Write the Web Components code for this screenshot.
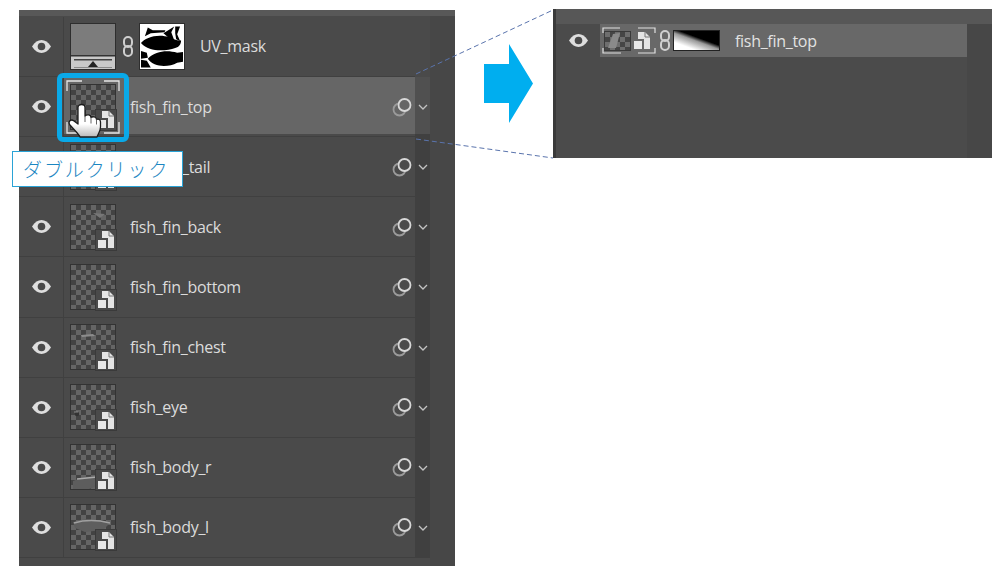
<!DOCTYPE html>
<html lang="ja">
<head>
<meta charset="utf-8">
<title>fish layers</title>
<style>
  html, body { margin: 0; background: #fff; }
  body { width: 992px; height: 568px; overflow: hidden; font-family: "Open Sans", "Noto Sans", sans-serif; }
</style>
</head>
<body>
<how-to-figure>
  <layer-panel slot="before">
    <layer-row kind="mask" name="UV_mask"></layer-row>
    <layer-row art="none" name="fish_fin_top" active></layer-row>
    <layer-row art="tail" name="_tail" indent></layer-row>
    <layer-row art="back" name="fish_fin_back"></layer-row>
    <layer-row art="none" name="fish_fin_bottom"></layer-row>
    <layer-row art="chest" name="fish_fin_chest"></layer-row>
    <layer-row art="eye" name="fish_eye"></layer-row>
    <layer-row art="bodyr" name="fish_body_r"></layer-row>
    <layer-row art="bodyl" name="fish_body_l"></layer-row>
  </layer-panel>
  <next-arrow slot="arrow"></next-arrow>
  <after-panel slot="after"></after-panel>
</how-to-figure>

<script>
const EYE = `<svg width="19" height="13" viewBox="0 0 19 13"><path d="M0 6.500C3 2 6 0 9.500 0S16 2 19 6.500C16 11 13 13 9.500 13S3 11 0 6.500z" fill="#dedede"/><circle cx="9.500" cy="6.500" r="3.800" fill="#4a4a4a"/></svg>`;
const LINK = `<svg width="10" height="21" viewBox="0 0 10 21" fill="none" stroke="#cfcfcf" stroke-width="2"><rect x="1" y="1" width="8" height="10" rx="4"/><rect x="1" y="10" width="8" height="10" rx="4"/></svg>`;
const SMART = `<svg width="16" height="17" viewBox="0 0 16 17"><path d="M4 0h7l5 5v12H10V7H4z" fill="#e4e4e4"/><path d="M11 0v5h5" fill="none" stroke="#777" stroke-width="1"/><rect x="0" y="9" width="8" height="8" fill="#e8e8e8"/></svg>`;
const ART = {
  none: '',
  tail: '<path d="M18 34l14-4 2 6-14 2z" fill="#8a8a8a"/>',
  back: '<path d="M22 8l12 1-5 4z" fill="#777"/>',
  chest: '<path d="M10 10l12-1 2 2-13 1z" fill="#8c8c8c"/>',
  eye: '<circle cx="6" cy="29" r="2.200" fill="#333"/><path d="M3 27h4" stroke="#999" stroke-width=".8"/>',
  bodyr: '<path d="M2 36l10-4 16-1 2 9-12 4-16 1z" fill="#5d5d5d"/><path d="M6 34l20-2" stroke="#aaa" stroke-width="1.500"/>',
  bodyl: '<path d="M2 17l14-3 24 3-8 8-18 2-10-4z" fill="#5e5e5e"/><path d="M3 18c10-3 24-3 36 0" fill="none" stroke="#a0a0a0" stroke-width="1.600"/>'
};

class LayerThumb extends HTMLElement {
  connectedCallback() {
    const art = ART[this.getAttribute('art')] || '';
    this.attachShadow({ mode: 'open' });
    this.shadowRoot.innerHTML = `
      <style>
        :host { display: block; position: relative; width: 46px; height: 46px; box-sizing: border-box; border: 1px solid #333;
          background: repeating-conic-gradient(#434343 0 25%, #656565 0 50%) 0 0 / 10px 10px; }
        svg.art { position: absolute; inset: 0; }
        .badge { position: absolute; right: -2px; bottom: -2px; width: 22px; height: 22px; box-sizing: border-box; background: #4a4a4a;
          border: 1px solid #3a3a3a; display: flex; align-items: center; justify-content: center; }
        .badge svg { display: block; }
      </style>
      <svg class="art" width="44" height="44" viewBox="0 0 44 44">${art}</svg>
      <div class="badge">${SMART}</div>`;
  }
}
customElements.define('layer-thumb', LayerThumb);

class MaskThumbs extends HTMLElement {
  connectedCallback() {
    this.attachShadow({ mode: 'open' });
    this.shadowRoot.innerHTML = `
      <style>
        :host { display: flex; align-items: center; }
        .adj { width: 46px; height: 47px; box-sizing: border-box; border: 1px solid #2e2e2e; background: #7c7c7c; display: flex; flex-direction: column; justify-content: flex-end; }
        .adj svg, .uv svg { display: block; }
        .link { width: 23px; display: flex; justify-content: center; }
        .uv { width: 46px; height: 47px; box-sizing: border-box; border: 1px solid #2e2e2e; background: #fff; }
      </style>
      <div class="adj"><svg width="44" height="14" viewBox="0 0 44 14"><rect width="44" height="14" fill="#c9c9c9"/><rect y="0" width="44" height="1.500" fill="#333"/><rect x="3" y="4" width="38" height="1.500" fill="#444"/><path d="M22 6l5 6H17z" fill="#222"/><rect x="3" y="12" width="38" height="1" fill="#8a8a8a"/></svg></div>
      <div class="link">${LINK}</div>
      <div class="uv"><svg width="44" height="45" viewBox="0 0 45 45">
        <path d="M5 12l3-9 5 3h13l-1 2-14 1z" fill="#000"/>
        <path d="M24 9l11-7-3 6 3 8-4-1z" fill="#000"/><path d="M36 2l5 0-3 8 3 7-4-2-1-6z" fill="#000"/>
        <path d="M1 19c4-6 18-10 29-6 5 2 9 4 12 3 0 4-2 7-6 8-9 3-26 5-35-5z" fill="#000"/>
        <path d="M1 27l6 2 1 5-7 1z" fill="#000"/>
        <path d="M8 35c8-8 20-9 30-6l6-1v10l-6 1c-9 5-24 5-30-4z" fill="#000"/>
        <path d="M1 36l6 1 4 7H1z" fill="#000"/>
      </svg></div>`;
  }
}
customElements.define('mask-thumbs', MaskThumbs);

class LayerRow extends HTMLElement {
  connectedCallback() {
    const mask = this.getAttribute('kind') === 'mask';
    const name = this.getAttribute('name');
    const art = this.getAttribute('art');
    const active = this.hasAttribute('active');
    this.attachShadow({ mode: 'open' });
    this.shadowRoot.innerHTML = `
      <style>
        :host { display: flex; height: 60.125px; box-sizing: border-box; }
        .main { width: 396px; flex: none; display: flex; align-items: center; box-sizing: border-box; border-bottom: 1px solid #404040; }
        :host([active]) .main { background: linear-gradient(#666 57.500px, #4a4a4a 57.500px); }
        .eye { width: 45px; height: 100%; flex: none; box-sizing: border-box; border-right: 1px solid #404040; padding-left: 1px; display: flex; align-items: center; justify-content: center; }
        :host([active]) .eye { background: #4a4a4a; }
        .eye svg { display: block; }
        .thumb { margin-left: 6px; flex: none; }
        .name { font: 16px "Open Sans", "Noto Sans", sans-serif; letter-spacing: -.3px; color: #dcdcdc; margin-left: 14px; white-space: nowrap; }
        :host([indent]) .name { margin-left: 66px; }
        .mask-name { margin-left: 15px; }
        .fx { margin-left: auto; margin-right: 2px; display: block; }
        .tail { width: 15px; flex: none; background: #404040; display: flex; align-items: center; justify-content: center; }
        :host([kind]) .tail { background: transparent; }
        :host([active]) .tail { background: linear-gradient(#505050 57.500px, #404040 57.500px); }
        .tail svg { display: block; }
      </style>
      <div class="main">
        <div class="eye">${EYE}</div>
        <div class="thumb">${mask ? '<mask-thumbs></mask-thumbs>' : `<layer-thumb art="${art}"></layer-thumb>`}</div>
        <span class="name ${mask ? 'mask-name' : ''}">${name}</span>
        ${mask ? '' : `<svg class="fx" width="21" height="20" viewBox="0 0 21 20" fill="none" stroke-width="1.800"><circle cx="7.500" cy="12.500" r="6" stroke="#9a9a9a"/><circle cx="12.500" cy="8" r="6" stroke="#d8d8d8" fill="${active ? '#666' : '#4a4a4a'}"/></svg>`}
      </div>
      <div class="tail">${mask ? '' : '<svg width="10" height="6" viewBox="0 0 10 6" fill="none" stroke="#c2c2c2" stroke-width="1.300"><path d="M1 1l4 4 4-4"/></svg>'}</div>`;
  }
}
customElements.define('layer-row', LayerRow);

class LayerPanel extends HTMLElement {
  connectedCallback() {
    this.attachShadow({ mode: 'open' });
    this.shadowRoot.innerHTML = `
      <style>
        :host { display: block; width: 436px; height: 556px; box-sizing: border-box; padding-top: 6.900px;
          background: linear-gradient(#585858 0, #585858 6px, #4a4a4a 6px); position: relative; }
        .side { position: absolute; left: 411px; right: 0; top: 6px; bottom: 0; background: #474747; }
        .rows { position: relative; }
      </style>
      <div class="side"></div>
      <div class="rows"><slot></slot></div>`;
  }
}
customElements.define('layer-panel', LayerPanel);

class NextArrow extends HTMLElement {
  connectedCallback() {
    this.attachShadow({ mode: 'open' });
    this.shadowRoot.innerHTML = `
      <style>
        :host { display: block; width: 49px; height: 79px; }
        svg { display: block; }
      </style>
      <svg width="49" height="79" viewBox="0 0 49 79"><path d="M0 20h25V0l24 39.500L25 79V59H0z" fill="#00aeef"/></svg>`;
  }
}
customElements.define('next-arrow', NextArrow);

class AfterPanel extends HTMLElement {
  connectedCallback() {
    this.attachShadow({ mode: 'open' });
    this.shadowRoot.innerHTML = `
      <style>
        :host { display: block; position: relative; width: 439px; height: 149px; box-sizing: border-box; padding-top: 15px;
          background: linear-gradient(#575757 0, #575757 15px, #4b4b4b 15px); border-left: 3px solid #3a3a3a; }
        .side { position: absolute; left: 411px; right: 0; top: 15px; bottom: 0; background: #474747; }
        .row { position: relative; display: flex; align-items: center; height: 33px; }
        .eye { width: 44px; flex: none; display: flex; justify-content: center; }
        .eye svg, .link svg { display: block; }
        .bar { width: 367px; height: 33px; flex: none; background: #686868; display: flex; align-items: center; box-sizing: border-box; padding-left: 2px; }
        .smart { position: relative; width: 54px; height: 27px; flex: none; display: flex; align-items: center; }
        .check { position: relative; width: 27px; height: 20px; margin-left: 2px; background: repeating-conic-gradient(#454545 0 25%, #6e6e6e 0 50%) 0 0 / 10px 10px; border: 1px solid #3a3a3a; box-sizing: border-box; }
        .check svg { position: absolute; left: 0; top: 0; display: block; }
        .tiny { margin-left: 3px; }
        .tiny svg { display: block; }
        .bracket { position: absolute; inset: 0; }
        .link { width: 17px; flex: none; display: flex; justify-content: center; }
        .grad { width: 47px; height: 21px; box-sizing: border-box; border: 1px solid #222; background: linear-gradient(20deg, #fff 22%, #999 48%, #000 60%); flex: none; }
        .name { font: 16px "Open Sans", "Noto Sans", sans-serif; letter-spacing: -.3px; color: #e2e2e2; margin-left: 15px; white-space: nowrap; }
      </style>
      <div class="side"></div>
      <div class="row">
        <div class="eye">${EYE}</div>
        <div class="bar">
          <div class="smart">
            <div class="check"><svg width="25" height="18" viewBox="0 0 25 18"><path d="M3 16l5-14 7-1-4 15z" fill="#8a8a8a"/></svg></div>
            <div class="tiny">${SMART}</div>
            <svg class="bracket" width="54" height="27" viewBox="0 0 54 27" fill="none" stroke="#e0e0e0" stroke-width="1.200">
              <path d="M18 1H1v5M1 21v5h18M36 1h17v5M53 21v5H36"/>
            </svg>
          </div>
          <div class="link">${LINK}</div>
          <div class="grad"></div>
          <span class="name">fish_fin_top</span>
        </div>
      </div>`;
  }
}
customElements.define('after-panel', AfterPanel);

class HowToFigure extends HTMLElement {
  connectedCallback() {
    this.attachShadow({ mode: 'open' });
    this.shadowRoot.innerHTML = `
      <style>
        :host { display: block; position: relative; width: 992px; height: 568px; box-sizing: border-box; }
        .flow { display: flex; align-items: flex-start; padding: 10px 0 0 19px; }
        .arrow { margin: 34px 20px 0 29px; }
        .after { margin-top: -1px; }
        .lines { position: absolute; inset: 0; pointer-events: none; }
        .select { position: absolute; left: 57px; top: 73px; width: 72px; height: 69px; box-sizing: border-box; border: 5px solid #0aa9e8; border-radius: 6px; }
        .corners { position: absolute; left: 66px; top: 80px; }
        .hand { position: absolute; left: 68px; top: 103px; }
        .tip { position: absolute; left: 12px; top: 151px; width: 171px; height: 36px; box-sizing: border-box; background: #fff; border: 1px solid #2aa3d6;
          font: 300 19px "Noto Sans CJK JP", sans-serif; letter-spacing: 1.900px; color: #1b86c2; display: flex; align-items: center; padding: 0 0 2px 10px; white-space: nowrap; }
      </style>
      <div class="flow">
        <div><slot name="before"></slot></div>
        <div class="arrow"><slot name="arrow"></slot></div>
        <div class="after"><slot name="after"></slot></div>
      </div>
      <svg class="lines" width="992" height="568" fill="none" stroke="#5a74ad" stroke-width="1" stroke-dasharray="5 3">
        <path d="M416 74L553 10"/><path d="M416 139L553 158"/>
      </svg>
      <div class="select"></div>
      <svg class="corners" width="54" height="54" viewBox="0 0 54 54" fill="none" stroke="#e6e6e6" stroke-width="1.300">
        <path d="M16 1H1v10M38 1h15v10M1 42v11h16M53 42v11H38"/>
      </svg>
      <svg class="hand" width="34" height="35" viewBox="0 0 34 35">
        <defs><linearGradient id="g" x1="0" y1="0" x2="0" y2="1"><stop offset=".6" stop-color="#fff"/><stop offset="1" stop-color="#b9b9b9"/></linearGradient></defs>
        <path d="M10 4.500c0-4 7-4 7 0V13c2-2 6-1.500 6 1.500 2-1.500 5.500-.5 5.500 2 2-1 4 0 4 2.500v5c0 4-2 6-3.500 10H12c-1-3-5-6-10-12-2.500-3.500 1-6.500 4-4l4 3z" fill="url(#g)" stroke="#1c1c1c" stroke-width="1.300" stroke-linejoin="round"/>
        <path d="M17 13v6M23 14.500v6M28.500 16.500v5" stroke="#666" stroke-width="1" fill="none"/>
      </svg>
      <div class="tip">ダブルクリック</div>`;
  }
}
customElements.define('how-to-figure', HowToFigure);
</script>
</body>
</html>
